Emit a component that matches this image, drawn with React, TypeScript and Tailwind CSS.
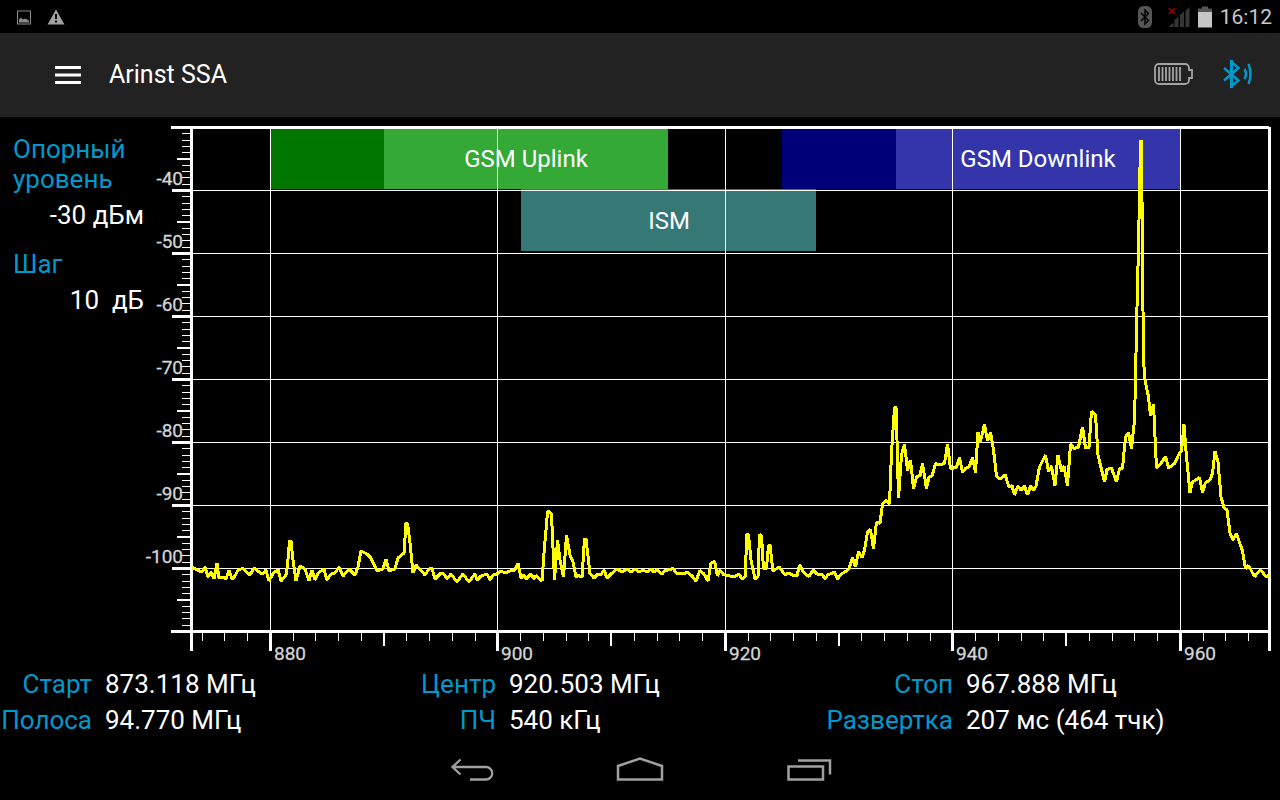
import React from 'react';

// Plot geometry, in the units of the chart's viewBox
const LEFT = 191.5;
const RIGHT = 1269.5;
const TOP = 127.5;
const BOTTOM = 631.5;
const REF_LEVEL = -30;

const xOf = (mhz: number) => Math.floor(192 + (mhz - 873.118) * 11.375) + 0.5;
const yOf = (dbm: number) => Math.round(TOP + (REF_LEVEL - dbm) * 6.3 - 0.5) + 0.5;

const GRID_DBM = [-40, -50, -60, -70, -80, -90, -100];
const GRID_MHZ = [880, 900, 920, 940, 960];
const TICKS_DBM = Array.from({ length: 79 }, (_, i) => -31 - i).filter((v) => v % 10 !== 0);
const TICKS_MHZ = Array.from({ length: 47 }, (_, i) => 874 + i * 2).filter((v) => v % 20 !== 0 && v < 968);
const MID_MHZ = [890, 910, 930, 950];

const BANDS = [
  { x: 271, width: 113, y: 129, height: 60, fill: '#007800' },
  { x: 384, width: 284, y: 129, height: 60, fill: '#35a935' },
  { x: 782, width: 114, y: 129, height: 60, fill: '#000078' },
  { x: 896, width: 284, y: 129, height: 60, fill: '#3535ab' },
  { x: 521, width: 295, y: 189, height: 62, fill: '#357876' },
];

const BAND_LABELS = [
  { x: 526, y: 167, text: 'GSM Uplink' },
  { x: 1038, y: 167, text: 'GSM Downlink' },
  { x: 669, y: 229, text: 'ISM' },
];

const TRACE = [
  '192,567 197,570 202,572 205,567 208,577 211,572 214,579 217,563 219,578 223,577 226,579 229,570 232,579 235,576 238,570 243,568.5 250,575 254,568 261,573.5 263,574 266,570 269,581',
  '273,573.5 278,569.5 281,581 286,575 287.5,565 289.5,541 291,541 293,560 296,581 300,566 305,569 309,581 312,570 315,580 318,573 324,569 327,580 331,574 335,573 339,567 343,576 349,569 355,575',
  '358,567 361,551 367,554 371,558 377,571 383,569 386,559 389,571 395,569 398,558 404,553 406,523.5 407.5,523.5 410,543 413,573 416,565 425,575 429,569 432,568 435,579 441,573 444,574 447,579',
  '451,574 457,582 463,574 469,582 475,574 477,580 481,576 487,574 490,580 493,575 497,574 501,571 505,573 510,571 515,570 518,563.5 521,578 524,575 526,579 531,574 534,579 536,575.5 542,581',
  '544,553 547.5,512.5 549,511 551.5,514.5 554.5,580 557.5,540 560,560 563.5,577 566.5,535 570,555 573,562 576,577 578,575.5 582,577 584.5,539 586,539 590,573.5 594,578 598,574 601,574.5',
  '604,570 607,578 611,574 617,569 622,572 627,569 631,572 635,569 639,572 643,570 647,572 651,569 654,572 657,569.5 662,574 665,570.5 670,569.5 673,568.5 677,573.5 684,574 687,572 692,576',
  '696,581 700,570.5 704,574 708,581 711,563.5 714.5,561 717.5,576 720,570 723.5,574.5 730,576 735,576.5 739,574 742,579 745,577 747,534.5 748.5,534.5 751,560 755,579 758,577 759.5,534.5 761.5,536 763.5,569',
  '766.5,568 768.5,545.5 770,545.5 773,571 779,567 785,574.5 789,573 793,575.5 797,576 799.5,565 804,573 809,576.5 813,570 817,574 822,574 825,579 828,574.5 832,573.5 834.5,572 837.5,579 841,574 845,572',
  '849,569 852.5,557.5 855.5,567 858.5,551.5 862,557.5 864.5,550 867.5,532 870.5,529.5 873.5,549 876.5,522 880,523.5 882.5,504 886,500.5 889.5,504 891.5,453 894.5,407.5 896,407.5 897,440 898.5,498',
  '901.5,455 904.5,444 907.5,470.5 910.5,460 913.5,488.5 916.5,477 920,475.5 922.5,463.5 926.5,488.5 929,477 932,476 935.5,463.5 939,465 944.5,463.5 947.5,444 950.5,469 956.5,467 959.5,457.5 962.5,472.5',
  '966,468 969,467 972.5,457.5 975.5,472.5 978,432.5 980.5,441.5 984.5,424.5 987.5,441 990.5,432.5 993.5,450 996.5,476 1000,479 1005,474.5 1009,487 1012,485.5 1014.5,495 1018,486 1021,490.5 1024.5,486 1027.5,495',
  '1030.5,486 1033.5,490.5 1036,486 1039.5,467 1045.5,455 1048.5,471.5 1051.5,466 1055,485.5 1058,455 1061.5,471.5 1064,466 1067.5,485.5 1070.5,444 1074,448.5 1078.5,447 1082.5,427 1085.5,448 1089,447.5 1091.5,411.5',
  '1095.5,415 1098,455 1104.5,482 1107,469.5 1111.5,468 1116.5,482 1119.5,468.5 1122.5,468 1125.5,437 1128.5,432.5 1131.5,449 1134.5,420 1135.5,380 1136.5,327 1138.5,247 1140.5,141 1141.5,141 1142.5,260 1143.5,360',
  '1145,380 1148.5,397 1150.5,415.5 1153.5,404.5 1156.5,468 1161,463.5 1165.5,456.5 1168.5,468 1175,463 1178.5,455 1181.5,451 1184,424.5 1186.5,457 1190,492.5 1192.5,482 1199.5,477.5 1202.5,492.5 1205.5,482.5',
  '1210,480 1212.5,473.5 1215,451.5 1218,462 1221,497 1224,507.5 1227,510 1230,533 1233,540 1236.5,533.5 1242.5,551 1245.5,568.5 1248.5,565.5 1254.5,576.5 1260.5,570 1266.5,577 1269,575',
].join(' ');

const READINGS = [
  {
    labelWidth: 'w-[92px]',
    rows: [
      { label: 'Старт', value: '873.118 МГц' },
      { label: 'Полоса', value: '94.770 МГц' },
    ],
  },
  {
    labelWidth: 'w-[92px]',
    rows: [
      { label: 'Центр', value: '920.503 МГц' },
      { label: 'ПЧ', value: '540 кГц' },
    ],
  },
  {
    labelWidth: 'w-[128px]',
    rows: [
      { label: 'Стоп', value: '967.888 МГц' },
      { label: 'Развертка', value: '207 мс (464 тчк)' },
    ],
  },
];

const StatusBar: React.FC = () => (
  <div className="flex h-[33px] items-center justify-between pl-4 pr-2">
    <div className="flex items-center gap-4">
      <svg width="15" height="16" viewBox="0 0 15 16" aria-hidden="true">
        <rect x="1.500" y="2" width="13" height="13" fill="none" stroke="#8a8a8a" />
        <path d="M3 13.500V10.500l2-2 2 2 2-1 2 1 2 1v2z" fill="#8a8a8a" />
      </svg>
      <svg width="18" height="16" viewBox="0 0 18 16" aria-hidden="true">
        <path d="M9 0.500 17.500 15.500H0.500z" fill="#a0a0a0" />
        <path d="M8 5h2v5H8zM8 11.500h2v2H8z" fill="#000" />
      </svg>
    </div>
    <div className="flex items-center">
      <svg width="14" height="22" viewBox="0 0 14 22" aria-hidden="true">
        <rect width="14" height="22" rx="5.500" fill="#555" />
        <path d="M3 7l7.500 7.500L7 18V4l3.500 3.500L3 15" fill="none" stroke="#000" strokeWidth="1.500" />
      </svg>
      <svg className="ml-4" width="22" height="22" viewBox="0 0 22 22" aria-hidden="true">
        <path d="M0.500 21l5-4.500V21zM6.500 21v-7l4-3.500V21zM12 21V9l4-3.500V21zM17.500 21V4.500L21.500 1v20z" fill="#363636" />
        <path d="M1 2l6 6M7 2 1 8" stroke="#a80000" strokeWidth="1.500" />
      </svg>
      <svg className="ml-2" width="14" height="22" viewBox="0 0 14 22" aria-hidden="true">
        <path d="M4 0.500h6v2h4v4H0v-4h4z" fill="#555" />
        <path d="M0 6h14v15.500H0z" fill="#c6c6c6" />
      </svg>
      <time className="ml-2 pt-px text-[21px] leading-8 text-[#c8c8c8]">16:12</time>
    </div>
  </div>
);

const Header: React.FC = () => (
  <header className="flex h-[84px] items-center bg-[#222222] pl-[55px] pr-7">
    <button type="button" aria-label="Menu">
      <svg width="26" height="18" viewBox="0 0 26 18" aria-hidden="true">
        <path d="M0 0h26v3H0zM0 7.500h26v3H0zM0 15h26v3H0z" fill="#fff" />
      </svg>
    </button>
    <h1 className="ml-7 text-[25px] leading-8">Arinst SSA</h1>
    <div className="ml-auto flex items-center gap-[30px] pb-0.5">
      <svg width="39" height="22" viewBox="0 0 39 22" aria-hidden="true">
        <path
          d="M5 1h26a4 4 0 0 1 4 4v2h3v8h-3v2a4 4 0 0 1-4 4H5a4 4 0 0 1-4-4V5a4 4 0 0 1 4-4z"
          fill="none"
          stroke="#a3a3a3"
          strokeWidth="1.800"
        />
        <path d="M5 4v14M8.500 4v14M12 4v14M15.500 4v14M19 4v14M22.500 4v14M26 4v14" stroke="#a3a3a3" strokeWidth="1.800" />
      </svg>
      <button type="button" aria-label="Bluetooth">
        <svg width="29" height="30" viewBox="0 0 29 30" fill="none" stroke="#0099cc" strokeWidth="2.500" aria-hidden="true">
          <path d="M1 9 15.500 21.500 8.500 27V3l7 6L1 21.500" />
          <path d="M8.500 1v28" strokeWidth="3.200" />
          <path d="M21.500 10q3 5 0 10" />
          <path d="M25.500 5q4 10 0 20" />
        </svg>
      </button>
    </div>
  </header>
);

const Spectrum: React.FC = () => (
  <svg
    className="block h-auto w-full"
    viewBox="144 117 1136 549"
    fontFamily="Roboto, 'Liberation Sans', sans-serif"
    role="img"
    aria-label="Спектр"
  >
    <g shapeRendering="crispEdges">
      {BANDS.map((b) => (
        <rect key={b.x} x={b.x} y={b.y} width={b.width} height={b.height} fill={b.fill} />
      ))}
    </g>

    <g fill="#fff" fontSize="24" textAnchor="middle">
      {BAND_LABELS.map((l) => (
        <text key={l.text} x={l.x} y={l.y}>
          {l.text}
        </text>
      ))}
    </g>

    {/* Grid, axes and ticks */}
    <g stroke="#fff" shapeRendering="crispEdges">
      {GRID_DBM.map((v) => (
        <React.Fragment key={v}>
          <line x1={LEFT} x2={RIGHT} y1={yOf(v)} y2={yOf(v)} />
          <line x1={172} x2={LEFT} y1={yOf(v)} y2={yOf(v)} strokeWidth={3} />
        </React.Fragment>
      ))}
      {GRID_MHZ.map((v) => (
        <React.Fragment key={v}>
          <line x1={xOf(v)} x2={xOf(v)} y1={TOP} y2={BOTTOM} />
          <line x1={xOf(v)} x2={xOf(v)} y1={BOTTOM} y2={651} strokeWidth={3} />
        </React.Fragment>
      ))}
      {TICKS_DBM.map((v) =>
        v % 5 === 0 ? (
          <line key={v} x1={177} x2={LEFT} y1={yOf(v) - 0.5} y2={yOf(v) - 0.5} strokeWidth={2} />
        ) : (
          <line key={v} x1={182} x2={LEFT} y1={yOf(v)} y2={yOf(v)} />
        )
      )}
      {TICKS_MHZ.filter((v) => !MID_MHZ.includes(v)).map((v) => (
        <line key={v} x1={xOf(v)} x2={xOf(v)} y1={BOTTOM} y2={641} />
      ))}
      {MID_MHZ.map((v) => (
        <line key={v} x1={xOf(v) - 0.5} x2={xOf(v) - 0.5} y1={BOTTOM} y2={646} strokeWidth={2} />
      ))}
      <path d="M171 127.500H1269M171 631.500H1271M191.500 127V651M1269.500 127V651" strokeWidth={3} fill="none" />
    </g>

    <g fill="#d4d4d4" stroke="#d4d4d4" strokeWidth={0.3} fontSize="19">
      {GRID_DBM.map((v) => (
        <text key={v} x={183} y={yOf(v) - 5.5} textAnchor="end">
          {v}
        </text>
      ))}
      {GRID_MHZ.map((v) => (
        <text key={v} x={xOf(v) + 3.5} y={660}>
          {v}
        </text>
      ))}
    </g>

    <polyline points={TRACE} fill="none" stroke="#ffff00" strokeWidth={3} strokeLinejoin="bevel" shapeRendering="crispEdges" />
  </svg>
);

const NavBar: React.FC = () => (
  <nav className="mt-auto flex h-[58px] items-center justify-center">
    <button type="button" aria-label="Back" className="flex w-[168px] justify-center">
      <svg width="48" height="28" viewBox="0 0 48 28" fill="none" stroke="#a0a0a0" strokeWidth="2.300" aria-hidden="true">
        <path d="M12.500 2.500 4.500 10l8 7.500M4.500 10H38a6 6 0 0 1 0 12.500H22" />
      </svg>
    </button>
    <button type="button" aria-label="Home" className="flex w-[168px] justify-center">
      <svg width="48" height="28" viewBox="0 0 48 28" fill="none" stroke="#a0a0a0" strokeWidth="2.500" aria-hidden="true">
        <path d="M2 22.500V9L24 1.500 46 9V22.500z" />
      </svg>
    </button>
    <button type="button" aria-label="Recent apps" className="flex w-[168px] justify-center">
      <svg width="48" height="28" viewBox="0 0 48 28" fill="none" stroke="#a0a0a0" strokeWidth="2.500" aria-hidden="true">
        <path d="M4.500 9.500H39V22.500H4.500z" />
        <path d="M14 3.500H46V17.500" />
      </svg>
    </button>
  </nav>
);

export default function App() {
  return (
    <div className="flex min-h-screen flex-col bg-black font-[Roboto,'Liberation_Sans',sans-serif] text-white">
      <StatusBar />
      <Header />

      <main>
        <div className="flex items-start">
          <dl className="w-[144px] shrink-0 pl-[13px] pt-[17px] text-[26px] leading-[30px]">
            <dt className="text-[#0099cc]">
              Опорный
              <br />
              уровень
            </dt>
            <dd className="mt-1.5 whitespace-nowrap text-right">-30 дБм</dd>
            <dt className="mt-[19px] text-[#0099cc]">Шаг</dt>
            <dd className="mt-1.5 whitespace-pre text-right">10  дБ</dd>
          </dl>
          <div className="min-w-0 flex-1">
            <Spectrum />
          </div>
        </div>

        <div className="grid grid-cols-[404fr_421fr_455fr] text-[26px] leading-9">
          {READINGS.map((group) => (
            <dl key={group.rows[0].label}>
              {group.rows.map((row) => (
                <div key={row.label} className="flex gap-[13px] whitespace-nowrap">
                  <dt className={`${group.labelWidth} shrink-0 text-right text-[#0099cc]`}>{row.label}</dt>
                  <dd>{row.value}</dd>
                </div>
              ))}
            </dl>
          ))}
        </div>
      </main>

      <NavBar />
    </div>
  );
}
